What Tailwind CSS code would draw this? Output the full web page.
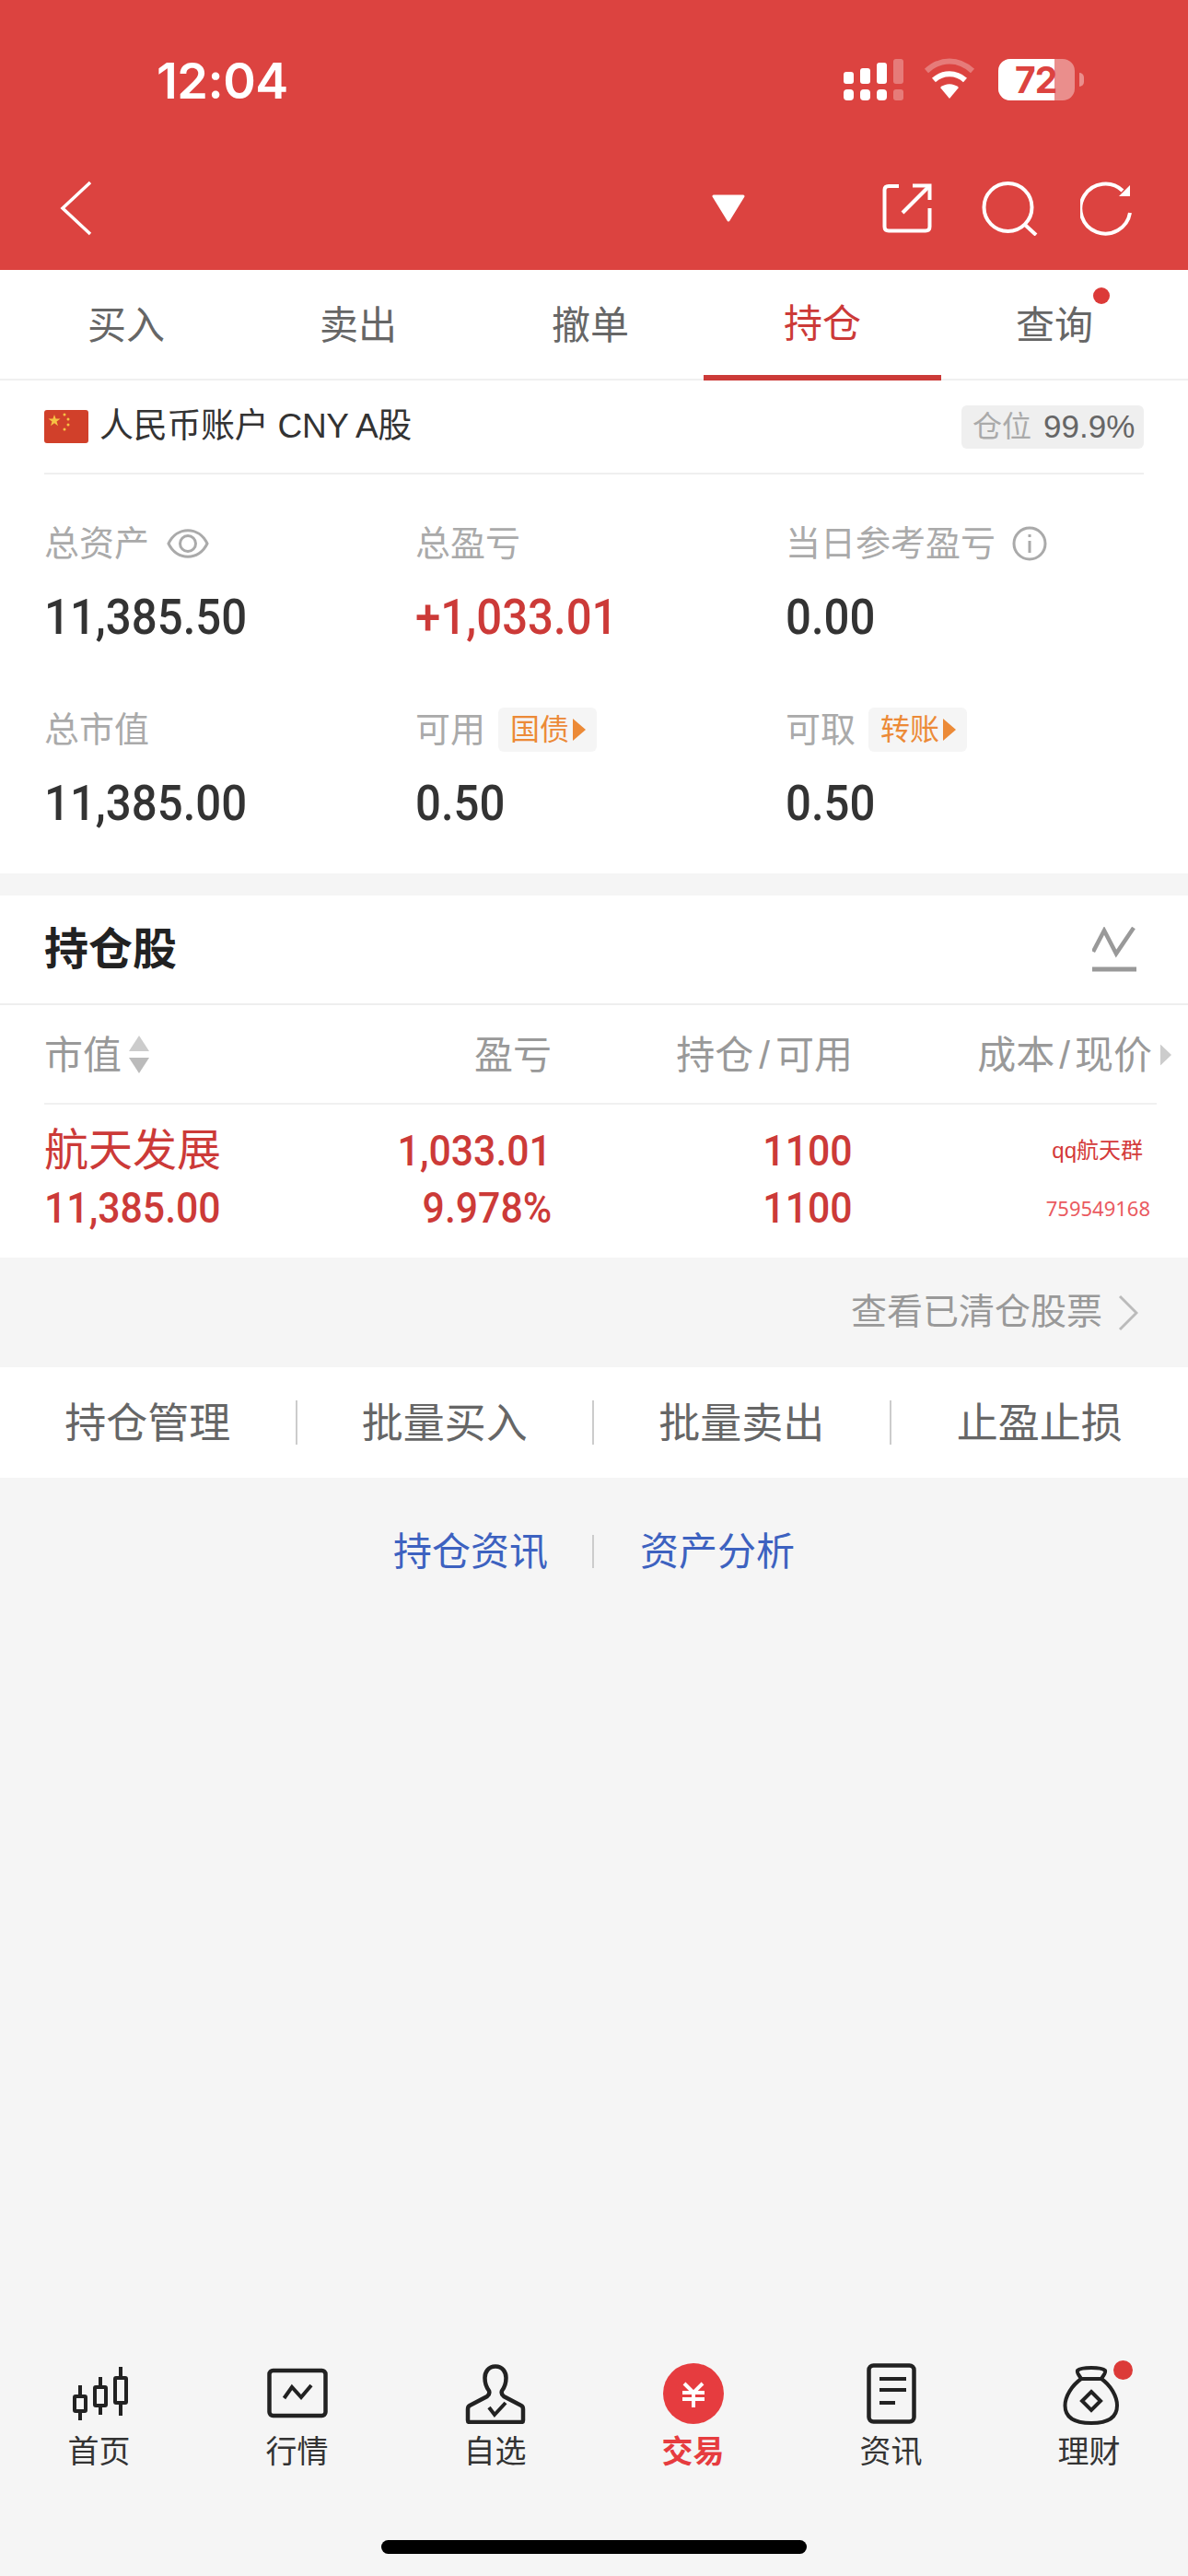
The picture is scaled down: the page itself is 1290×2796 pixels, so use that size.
<!DOCTYPE html>
<html lang="zh-CN">
<head>
<meta charset="UTF-8">
<title>持仓</title>
<script src="https://cdn.jsdelivr.net/npm/@tailwindcss/browser@4"></script>
</head>
<body class="font-['Liberation_Sans','Noto_Sans_CJK_SC',sans-serif] bg-[#f5f5f5]">
<div class="w-[1290px] h-[2796px] flex flex-col overflow-hidden">

  <!-- red header -->
  <header class="bg-[#dc4340] h-[293px] shrink-0 text-white">
    <div class="h-[176px] flex items-start">
      <div class="ml-[170px] mt-[57px] text-[54px] leading-[62px] font-semibold font-['Inter',sans-serif] tracking-[-0.5px]">12:04</div>
      <div class="ml-auto mr-[113px] mt-[60px] flex items-start">
        <svg class="w-[72px] h-[50px]" viewBox="0 0 72 50" fill="#fff">
          <rect x="2" y="18" width="11" height="13" rx="3"/><rect x="20" y="14" width="11" height="17" rx="3"/><rect x="38" y="8" width="11" height="23" rx="3"/><rect x="56" y="4" width="11" height="27" rx="3" opacity=".3"/>
          <rect x="2" y="37" width="11" height="12" rx="4"/><rect x="20" y="37" width="11" height="12" rx="4"/><rect x="38" y="37" width="11" height="12" rx="4"/><rect x="56" y="37" width="11" height="12" rx="3" opacity=".3"/>
        </svg>
        <svg class="ml-[16px] w-[58px] h-[50px]" viewBox="0 0 58 50" fill="none" stroke="#fff">
          <path d="M4 17C19 3 39 3 54 17" stroke-width="6" opacity=".3"/>
          <path d="M12 27C22 18 36 18 46 27" stroke-width="6"/>
          <path d="M19 35C25 30 33 30 39 35L29 47Z" fill="#fff" stroke="none"/>
        </svg>
        <div class="relative ml-[24px] w-[83px] h-[45px] mt-[4px] rounded-[13px] bg-white/40 overflow-hidden">
          <div class="absolute left-0 top-0 h-full w-[61px] bg-white"></div>
          <div class="absolute left-[18px] top-0 leading-[45px] text-[39px] font-bold text-[#dc4340] font-['Inter',sans-serif] tracking-[-1px]">72</div>
        </div>
        <div class="ml-[5px] mt-[19px] w-[5px] h-[15px] rounded-r-full bg-white/40"></div>
      </div>
    </div>
    <div class="flex items-center h-[64px] mt-[18px]">
      <svg class="ml-[64px] w-[38px] h-[60px]" viewBox="0 0 38 60" fill="none" stroke="#fff" stroke-width="3.5"><path d="M34 2L4 30L34 58"/></svg>
      <svg class="ml-[670px] w-[38px] h-[30px]" viewBox="0 0 38 30" fill="#fff" stroke="#fff" stroke-width="3" stroke-linejoin="round"><path d="M3 2H35L19 28Z"/></svg>
      <svg class="ml-[148px] w-[54px] h-[54px]" viewBox="0 0 54 54" fill="none" stroke="#fff" stroke-width="4"><path d="M18 3H7Q2.5 3 2.5 7V47Q2.5 51.5 7 51.5H47Q51.5 51.5 51.5 47V27"/><path d="M22 32L50 4"/><path d="M33 2.5H51.5V18"/></svg>
      <svg class="ml-[54px] w-[62px] h-[60px]" viewBox="0 0 62 60" fill="none" stroke="#fff" stroke-width="4"><circle cx="28.5" cy="29" r="26"/><path d="M47 48L59 59"/></svg>
      <svg class="ml-[45px] w-[60px] h-[60px]" viewBox="0 0 60 60" fill="none" stroke="#fff" stroke-width="4"><path d="M46 11A27 27 0 1 0 54 35"/><path d="M54 5V17H42Z" fill="#fff" stroke="none"/></svg>
    </div>
  </header>

  <!-- tabs -->
  <nav class="bg-white h-[120px] shrink-0 pl-[11px] grid grid-cols-[repeat(5,252px)] border-b-2 border-[#f0f0f0] text-[42px] text-[#666]">
    <div class="flex items-center justify-center pt-[2px]">买入</div>
    <div class="flex items-center justify-center pt-[2px]">卖出</div>
    <div class="flex items-center justify-center pt-[2px]">撤单</div>
    <div class="-mx-[3px] flex items-center justify-center pt-[2px] text-[#cc3a38] border-b-[6px] border-[#cc3a38] -mb-[2px]">持仓</div>
    <div class="relative flex items-center justify-center pt-[2px]">查询
      <span class="absolute left-[168px] top-[19px] w-[18px] h-[18px] rounded-full bg-[#dc3a38]"></span>
    </div>
  </nav>

  <!-- account summary -->
  <section class="bg-white h-[535px] shrink-0 px-[48px]">
    <div class="h-[102px] flex items-center border-b-2 border-[#efefef]">
      <svg class="w-[48px] h-[36px] rounded-[3px]" viewBox="0 0 48 36"><rect width="48" height="36" fill="#d1402a"/><path d="M11 5l1.6 4.6h4.9l-4 2.9 1.5 4.7-4-2.9-4 2.9 1.5-4.7-4-2.9h4.9z" fill="#f6c244"/><circle cx="22" cy="5" r="1.5" fill="#f6c244"/><circle cx="26" cy="10" r="1.5" fill="#f6c244"/><circle cx="26" cy="16" r="1.5" fill="#f6c244"/><circle cx="22" cy="21" r="1.5" fill="#f6c244"/></svg>
      <span class="ml-[12px] text-[37px] tracking-[-0.3px] text-[#333]">人民币账户 CNY A股</span>
      <div class="ml-auto w-[198px] h-[47px] pl-[12px] rounded-[6px] bg-[#efefef] flex items-center text-[35px] text-[#666]"><span class="text-[32px] text-[#aaa]">仓位</span><span class="ml-[13px]">99.9%</span></div>
    </div>
    <div class="grid grid-cols-[403px_402px_1fr] pt-[50px]">
      <div class="h-[202px]">
        <div class="flex items-center h-[50px] text-[38px] text-[#aaa]">总资产
          <svg class="ml-[19px] w-[46px] h-[34px]" viewBox="0 0 46 34" fill="none" stroke="#aaa" stroke-width="3"><path d="M2 17C11 -2 35 -2 44 17C35 36 11 36 2 17Z"/><circle cx="23" cy="17" r="8.5"/></svg>
        </div>
        <div class="mt-[25px] text-[54px] leading-[60px] font-medium text-[#333] font-['Roboto',sans-serif]"><span class="inline-block origin-left scale-x-[.91]">11,385.50</span></div>
      </div>
      <div>
        <div class="flex items-center h-[50px] text-[38px] text-[#aaa]">总盈亏</div>
        <div class="mt-[25px] text-[54px] leading-[60px] font-medium text-[#cc3a38] font-['Roboto',sans-serif]"><span class="inline-block origin-left scale-x-[.91]">+1,033.01</span></div>
      </div>
      <div>
        <div class="flex items-center h-[50px] text-[38px] text-[#aaa]">当日参考盈亏
          <svg class="ml-[18px] w-[38px] h-[38px]" viewBox="0 0 38 38" fill="none" stroke="#aaa" stroke-width="3"><circle cx="19" cy="19" r="17"/><path d="M19 16V29M19 9V12"/></svg>
        </div>
        <div class="mt-[25px] text-[54px] leading-[60px] font-medium text-[#333] font-['Roboto',sans-serif]"><span class="inline-block origin-left scale-x-[.91]">0.00</span></div>
      </div>
      <div>
        <div class="flex items-center h-[50px] text-[38px] text-[#aaa]">总市值</div>
        <div class="mt-[25px] text-[54px] leading-[60px] font-medium text-[#333] font-['Roboto',sans-serif]"><span class="inline-block origin-left scale-x-[.91]">11,385.00</span></div>
      </div>
      <div>
        <div class="flex items-center h-[50px] text-[38px] text-[#aaa]">可用
          <div class="ml-[14px] h-[48px] w-[107px] rounded-[6px] bg-[#f5f5f5] flex items-center pl-[13px] text-[32px] text-[#ec8a37]">国债<svg class="ml-[4px] w-[14px] h-[24px]" viewBox="0 0 14 24" fill="#ec8a37"><path d="M0 0L14 12L0 24Z"/></svg></div>
        </div>
        <div class="mt-[25px] text-[54px] leading-[60px] font-medium text-[#333] font-['Roboto',sans-serif]"><span class="inline-block origin-left scale-x-[.91]">0.50</span></div>
      </div>
      <div>
        <div class="flex items-center h-[50px] text-[38px] text-[#aaa]">可取
          <div class="ml-[14px] h-[48px] w-[107px] rounded-[6px] bg-[#f5f5f5] flex items-center pl-[13px] text-[32px] text-[#ec8a37]">转账<svg class="ml-[4px] w-[14px] h-[24px]" viewBox="0 0 14 24" fill="#ec8a37"><path d="M0 0L14 12L0 24Z"/></svg></div>
        </div>
        <div class="mt-[25px] text-[54px] leading-[60px] font-medium text-[#333] font-['Roboto',sans-serif]"><span class="inline-block origin-left scale-x-[.91]">0.50</span></div>
      </div>
    </div>
  </section>

  <!-- holdings -->
  <section class="mt-[24px] bg-white shrink-0">
    <div class="h-[119px] flex items-center justify-between pl-[48px] pr-[56px] border-b-2 border-[#eee]">
      <span class="text-[48px] font-bold text-[#222]">持仓股</span>
      <svg class="w-[48px] h-[50px]" viewBox="0 0 48 50" fill="none" stroke="#999"><path d="M1 27L13 4L26 29L45 1" stroke-width="4.5"/><path d="M0 46H48" stroke-width="5"/></svg>
    </div>
    <div class="ml-[48px] mr-[34px] h-[108px] pt-[2px] border-b-2 border-[#f0f0f0] grid grid-cols-[300px_251px_327px_1fr] items-center text-[42px] text-[#999]">
      <div class="flex items-center">市值
        <svg class="ml-[8px] w-[22px] h-[42px]" viewBox="0 0 22 42" fill="#ccc"><path d="M11 0L22 17H0Z"/><path d="M0 24H22L11 41Z" fill="#bbb"/></svg>
      </div>
      <div class="text-right">盈亏</div>
      <div class="text-right">持仓<span class="mx-[6px]">/</span>可用</div>
      <div class="relative text-right pr-[5px]">成本<span class="mx-[5px]">/</span>现价<svg class="absolute right-[-16px] top-1/2 -translate-y-1/2 w-[12px] h-[23px]" viewBox="0 0 12 23" fill="#ccc"><path d="M0 0L12 11.5L0 23Z"/></svg></div>
    </div>
    <div class="ml-[48px] mr-[34px] h-[166px] grid grid-cols-[300px_251px_327px_1fr] content-start text-[#cc3a38] font-['Roboto',sans-serif] font-medium text-[46px] leading-[62px] pt-[19px]">
      <div class="-mt-[5px] font-['Noto_Sans_CJK_SC',sans-serif] font-normal text-[48px]">航天发展</div>
      <div class="text-right"><span class="inline-block origin-right scale-x-[.93]">1,033.01</span></div>
      <div class="text-right"><span class="inline-block origin-right scale-x-[.93]">1100</span></div>
      <div class="text-right pr-[15px] text-[24px] font-normal font-['Liberation_Sans','Noto_Sans_CJK_SC',sans-serif] text-[#d43a3a]">qq航天群</div>
      <div><span class="inline-block origin-left scale-x-[.93]">11,385.00</span></div>
      <div class="text-right"><span class="inline-block origin-right scale-x-[.93]">9.978%</span></div>
      <div class="text-right"><span class="inline-block origin-right scale-x-[.93]">1100</span></div>
      <div class="text-right pr-[7px] text-[22px] font-normal font-['Noto_Sans',sans-serif] text-[#ea5a60]">759549168</div>
    </div>
  </section>

  <!-- cleared stocks link -->
  <div class="h-[119px] shrink-0 flex items-center justify-end pr-[54px] text-[39px] text-[#999]">查看已清仓股票
    <svg class="ml-[17px] w-[22px] h-[40px]" viewBox="0 0 22 40" fill="none" stroke="#bbb" stroke-width="3"><path d="M2 2L20 20L2 38"/></svg>
  </div>

  <!-- actions -->
  <div class="h-[120px] shrink-0 bg-white grid grid-cols-4 items-center text-[45px] text-[#666] text-center">
    <div class="h-[48px] leading-[52px] border-r-2 border-[#ccc]">持仓管理</div>
    <div class="h-[48px] leading-[52px] border-r-2 border-[#ccc]">批量买入</div>
    <div class="h-[48px] leading-[52px] border-r-2 border-[#ccc]">批量卖出</div>
    <div class="h-[48px] leading-[52px]">止盈止损</div>
  </div>

  <div class="h-[160px] shrink-0 flex items-center justify-center text-[42px] text-[#3d62c0]">
    <span>持仓资讯</span><span class="ml-[48px] mr-[50px] w-[2px] h-[36px] bg-[#ccc]"></span><span>资产分析</span>
  </div>

  <!-- bottom nav -->
  <div class="mt-auto grid grid-cols-6 text-[34px] text-[#333] text-center">
    <div class="flex flex-col items-center">
      <svg class="w-[66px] h-[66px]" viewBox="0 0 66 66" fill="none" stroke="#222" stroke-width="4"><rect x="6" y="36" width="12" height="16" rx="1"/><path d="M12 24V36M12 52V62"/><rect x="28" y="26" width="12" height="20" rx="1"/><path d="M34 15V26M34 46V56"/><rect x="50" y="16" width="12" height="27" rx="1"/><path d="M56 4V16M56 43V57"/></svg>
      <div class="mt-[5px] leading-[50px]">首页</div>
    </div>
    <div class="flex flex-col items-center">
      <svg class="w-[66px] h-[66px]" viewBox="0 0 66 66" fill="none" stroke="#222" stroke-width="4.5"><rect x="2.5" y="8" width="61" height="49" rx="4"/><path d="M18.5 38L27 26L37 37L48 24" stroke-width="4"/></svg>
      <div class="mt-[5px] leading-[50px]">行情</div>
    </div>
    <div class="flex flex-col items-center">
      <svg class="w-[66px] h-[66px]" viewBox="0 0 66 66" fill="none" stroke="#222" stroke-width="4.5"><path d="M33 3.5C25 3.5 21.5 10 21.5 16C21.5 22 23 26 26 30C27 33 26 34.5 24 36L5 46Q3 47 3 50V62Q3 64 5 64H61Q63 64 63 62V50Q63 47 61 46L42 36C40 34.5 39 33 40 30C43 26 44.5 22 44.5 16C44.5 10 41 3.5 33 3.5Z"/><path d="M26 48L32 56L44 43" stroke-width="4"/></svg>
      <div class="mt-[5px] leading-[50px]">自选</div>
    </div>
    <div class="flex flex-col items-center text-[#e63c3f] font-bold">
      <svg class="w-[66px] h-[66px]" viewBox="0 0 66 66"><circle cx="33" cy="33" r="33" fill="#e63c3f"/><path d="M23 22L33 32L43 22M33 32V48M21 32H45M21 39H45" fill="none" stroke="#fff" stroke-width="4"/></svg>
      <div class="mt-[5px] leading-[50px]">交易</div>
    </div>
    <div class="flex flex-col items-center">
      <svg class="w-[66px] h-[66px]" viewBox="0 0 66 66" fill="none" stroke="#222" stroke-width="4.5"><rect x="8.5" y="2.5" width="49" height="61" rx="5"/><path d="M20 17H49M20 29H49M20 43H37" stroke-width="4"/></svg>
      <div class="mt-[5px] leading-[50px]">资讯</div>
    </div>
    <div class="relative flex flex-col items-center">
      <svg class="w-[66px] h-[66px] overflow-visible" viewBox="0 0 66 66" fill="none" stroke="#222" stroke-width="4"><path d="M24 17C22 13 19 11 20 8C24 4 46 4 50 8C51 11 48 13 46 17Z"/><path d="M24 17C14 24 6.5 36 6.5 46C6.5 59 17 65 35 65C53 65 63 59 63 46C63 36 56 24 46 17"/><path d="M35 31L45 41L35 51L25 41Z"/></svg>
      <div class="mt-[5px] leading-[50px]">理财</div>
      <span class="absolute left-[134px] top-[-3px] w-[21px] h-[21px] rounded-full bg-[#dc3a38]"></span>
    </div>
  </div>

  <!-- home indicator -->
  <div class="h-[110px] shrink-0 flex justify-center pt-[71px]">
    <div class="w-[462px] h-[15px] rounded-full bg-black"></div>
  </div>
</div>
</body>
</html>
